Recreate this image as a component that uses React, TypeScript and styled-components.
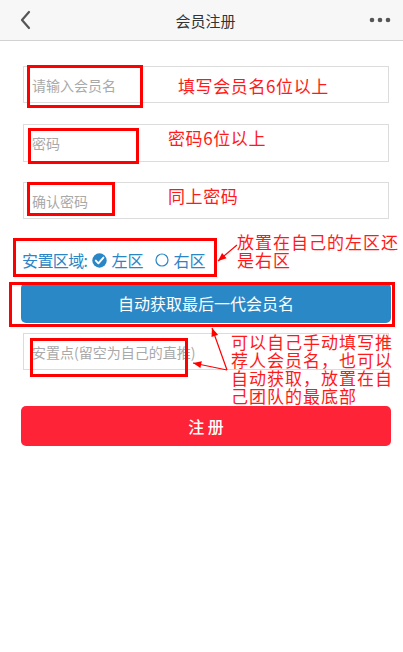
import React from "react";
import styled, { createGlobalStyle } from "styled-components";

const Global = createGlobalStyle`
  html, body { margin: 0; padding: 0; background: #fff; }
  body { font-family: "Noto Sans CJK SC", "Noto Sans", sans-serif; }
  * { box-sizing: border-box; }
`;

const Page = styled.div`
  position: relative;
  width: 403px;
  height: 652px;
  background: #fff;
  overflow: hidden;
`;

const Header = styled.header`
  height: 41px;
  background: #f7f7f7;
  border-bottom: 1px solid #d2d2d2;
  display: flex;
  align-items: center;
  justify-content: space-between;
  padding: 0 8px 0 18px;
`;

const Title = styled.h1`
  margin: 0;
  font-size: 15px;
  font-weight: 400;
  color: #333;
  line-height: 1;
`;

const IconBtn = styled.span<{ $w?: number }>`
  display: flex;
  align-items: center;
  width: ${(p) => p.$w ?? 24}px;
  height: 24px;
`;

const Form = styled.main`
  display: flex;
  flex-direction: column;
  padding: 25px 12px 0 21px;
`;

const Input = styled.input<{ $h?: number; $mt?: number }>`
  display: block;
  width: 366px;
  height: ${(p) => p.$h ?? 37}px;
  margin: ${(p) => p.$mt ?? 0}px 0 0 2px;
  border: 1px solid #dcdcdc;
  padding: 0 8px;
  font-family: "Noto Sans CJK SC", sans-serif;
  font-size: 14px;
  color: #333;
  outline: none;
  background: #fff;
  &::placeholder { color: #a9a9a9; }
`;

const RegionRow = styled.div`
  display: flex;
  align-items: center;
  height: 40px;
  margin-top: 21px;
  padding-left: 1px;
  font-size: 16px;
  color: #2b86c6;
`;

const RegionLabel = styled.span`
  letter-spacing: -0.6px;
`;

const Option = styled.label<{ $ml: number }>`
  display: flex;
  align-items: center;
  gap: 4px;
  margin-left: ${(p) => p.$ml}px;
`;

const Button = styled.button<{ $bg: string; $mt: number; $bold?: boolean }>`
  width: 370px;
  height: 40px;
  margin-top: ${(p) => p.$mt}px;
  border: none;
  border-radius: 5px;
  background: ${(p) => p.$bg};
  color: #fff;
  font-family: "Noto Sans CJK SC", sans-serif;
  font-size: 16px;
  font-weight: ${(p) => (p.$bold ? 500 : 400)};
`;

const MarkBox = styled.div`
  position: absolute;
  border: 3px solid #ff0000;
  pointer-events: none;
`;

const Note = styled.div`
  position: absolute;
  color: #ff1a1a;
  font-size: 17px;
  line-height: 18px;
  letter-spacing: 0.6px;
  white-space: pre;
  pointer-events: none;
`;

const Arrows = styled.svg`
  position: absolute;
  left: 0;
  top: 0;
  pointer-events: none;
`;

const boxes = [
  { l: 27, t: 65, w: 116, h: 43 },
  { l: 28, t: 128, w: 111, h: 36 },
  { l: 27, t: 182, w: 88, h: 34 },
  { l: 13, t: 238, w: 204, h: 39 },
  { l: 9, t: 282, w: 386, h: 45 },
  { l: 30, t: 338, w: 158, h: 39 },
];

const notes = [
  { l: 178, t: 77, text: "填写会员名6位以上" },
  { l: 168, t: 129, text: "密码6位以上" },
  { l: 168, t: 187, text: "同上密码" },
  { l: 237, t: 233, text: "放置在自己的左区还\n是右区", ls: 1 },
  { l: 231, t: 333, text: "可以自己手动填写推\n荐人会员名，也可以\n自动获取，放置在自\n己团队的最底部", ls: 1 },
];

const arrows = [
  { x1: 237, y1: 245, x2: 218, y2: 261 },
  { x1: 227, y1: 370, x2: 193, y2: 363 },
  { x1: 227, y1: 370, x2: 212, y2: 328 },
];

function Arrow({ x1, y1, x2, y2 }: { x1: number; y1: number; x2: number; y2: number }) {
  const a = Math.atan2(y2 - y1, x2 - x1);
  const len = 9;
  const spread = 0.4;
  const p1 = [x2 - len * Math.cos(a - spread), y2 - len * Math.sin(a - spread)];
  const p2 = [x2 - len * Math.cos(a + spread), y2 - len * Math.sin(a + spread)];
  return (
    <g>
      <line x1={x1} y1={y1} x2={x2} y2={y2} stroke="#ff0000" strokeWidth={1.2} />
      <polygon points={`${x2},${y2} ${p1[0]},${p1[1]} ${p2[0]},${p2[1]}`} fill="#ff0000" />
    </g>
  );
}

export default function App() {
  return (
    <Page>
      <Global />
      <Header>
        <IconBtn>
          <svg width="14" height="20" viewBox="0 0 14 20">
            <path d="M11 2 L4 10 L11 18" fill="none" stroke="#555" strokeWidth="2.2" strokeLinecap="round" strokeLinejoin="round" />
          </svg>
        </IconBtn>
        <Title>会员注册</Title>
        <IconBtn $w={26}>
          <svg width="24" height="6" viewBox="0 0 24 6">
            <circle cx="3" cy="3" r="2.3" fill="#555" />
            <circle cx="11" cy="3" r="2.3" fill="#555" />
            <circle cx="19" cy="3" r="2.3" fill="#555" />
          </svg>
        </IconBtn>
      </Header>
      <Form>
        <Input placeholder="请输入会员名" />
        <Input placeholder="密码" type="password" $h={38} $mt={21} />
        <Input placeholder="确认密码" type="password" $mt={20} />
        <RegionRow>
          <RegionLabel>安置区域:</RegionLabel>
          <Option $ml={5}>
            <svg width="15" height="15" viewBox="0 0 15 15">
              <circle cx="7.5" cy="7.5" r="7.2" fill="#2b86c6" />
              <path d="M3.8 7.6 L6.4 10.3 L11.4 4.6" fill="none" stroke="#fff" strokeWidth="1.9" strokeLinecap="round" strokeLinejoin="round" />
            </svg>
            左区
          </Option>
          <Option $ml={12}>
            <svg width="14" height="14" viewBox="0 0 14 14">
              <circle cx="7" cy="7" r="6" fill="none" stroke="#2b86c6" strokeWidth="1.2" />
            </svg>
            右区
          </Option>
        </RegionRow>
        <Button $bg="#2b88c7" $mt={3}>自动获取最后一代会员名</Button>
        <Input placeholder="安置点(留空为自己的直推)" $mt={10} />
        <Button $bg="#ff2337" $mt={36} $bold>注 册</Button>
      </Form>
      {boxes.map((b, i) => (
        <MarkBox key={i} style={{ left: b.l, top: b.t, width: b.w, height: b.h }} />
      ))}
      {notes.map((n, i) => (
        <Note key={i} style={{ left: n.l, top: n.t, letterSpacing: n.ls }}>
          {n.text}
        </Note>
      ))}
      <Arrows width="403" height="652">
        {arrows.map((a, i) => (
          <Arrow key={i} {...a} />
        ))}
      </Arrows>
    </Page>
  );
}
